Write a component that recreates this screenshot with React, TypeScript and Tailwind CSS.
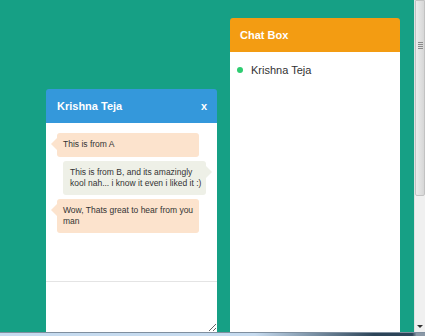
import React from "react";

const font = { fontFamily: '"Liberation Sans", Arial, sans-serif' };

function Bubble({
  side,
  children,
}: {
  side: "left" | "right";
  children: React.ReactNode;
}) {
  if (side === "left") {
    return (
      <div className="relative ml-[11px] w-[142px] whitespace-nowrap rounded-[3px] bg-[#fce3cd] px-[6px] py-[6px] min-h-[24px] text-[8.5px] leading-[11px] text-[#333]">
        <span className="absolute left-[-6px] top-[5px] h-0 w-0 border-y-[6px] border-y-transparent border-r-[6px] border-r-[#fce3cd]" />
        {children}
      </div>
    );
  }
  return (
    <div className="relative ml-[17px] w-[143px] whitespace-nowrap rounded-[3px] bg-[#eef0e7] px-[7px] py-[6px] min-h-[24px] text-[8.5px] leading-[11px] text-[#333]">
      <span className="absolute right-[-6px] top-[5px] h-0 w-0 border-y-[6px] border-y-transparent border-l-[6px] border-l-[#eef0e7]" />
      {children}
    </div>
  );
}

export default function App() {
  return (
    <div className="flex h-[336px] w-[425px] flex-col overflow-hidden" style={font}>
      <div className="flex h-[332px] w-full">
        {/* main canvas */}
        <div className="flex h-full w-[414px] bg-[#16a085] pl-[46px]">
          {/* chat window */}
          <div className="mt-[89px] flex w-[171px] flex-col">
            <div className="flex h-[34px] items-center justify-between rounded-t-[3px] bg-[#3498db] pl-[11px] pr-[10px] text-[11px] font-bold text-white">
              <span>Krishna Teja</span>
              <span>x</span>
            </div>
            <div className="flex h-[158px] flex-col gap-[4px] bg-white pt-[10px]">
              <Bubble side="left">This is from A</Bubble>
              <Bubble side="right">
                This is from B, and its amazingly
                <br />
                kool nah... i know it even i liked it :)
              </Bubble>
              <Bubble side="left">
                Wow, Thats great to hear from you
                <br />
                man
              </Bubble>
            </div>
            <textarea
              className="block h-[51px] w-full resize-y border-t border-[#e4e4e4] bg-white outline-none"
              aria-label="message"
            />
          </div>

          {/* chat box list */}
          <div className="ml-[13px] mt-[18px] flex w-[170px] flex-col">
            <div className="flex h-[34px] items-center rounded-t-[3px] bg-[#f39c12] pl-[10px] text-[11px] font-bold text-white">
              Chat Box
            </div>
            <div className="flex-1 bg-white pt-[11px] pl-[7px]">
              <div className="flex items-center gap-[8px] text-[11px] leading-[14px] text-[#333]">
                <span className="h-[6px] w-[6px] rounded-full bg-[#2ecc71]" />
                <span>Krishna Teja</span>
              </div>
            </div>
          </div>
        </div>

        {/* scrollbar */}
        <div className="flex h-full w-[11px] flex-col border-l border-[#e2e2e2] bg-[#f0f0f0]">
          <div className="flex h-[196px] w-[10px] flex-col items-center rounded-b-[2px] border border-[#c2c2c2] bg-[linear-gradient(to_right,#ececec,#d6d6d6)] pt-[41px]">
            <div className="flex flex-col gap-[1px]">
              <span className="h-[1px] w-[5px] bg-[#8a8a8a]" />
              <span className="h-[1px] w-[5px] bg-[#8a8a8a]" />
              <span className="h-[1px] w-[5px] bg-[#8a8a8a]" />
              <span className="h-[1px] w-[5px] bg-[#8a8a8a]" />
            </div>
          </div>
          <div className="flex-1" />
          <div className="mb-[4px] flex justify-center">
            <span className="h-0 w-0 border-x-[3px] border-x-transparent border-t-[3px] border-t-[#333]" />
          </div>
        </div>
      </div>
      {/* taskbar strip */}
      <div className="h-[4px] w-full border-t border-[#7f8f9f] bg-[linear-gradient(to_right,#c6dbef_0%,#c6dbef_60%,#2c4458_88%,#2c4458_97%,#8a98a6_98%)]" />
    </div>
  );
}
